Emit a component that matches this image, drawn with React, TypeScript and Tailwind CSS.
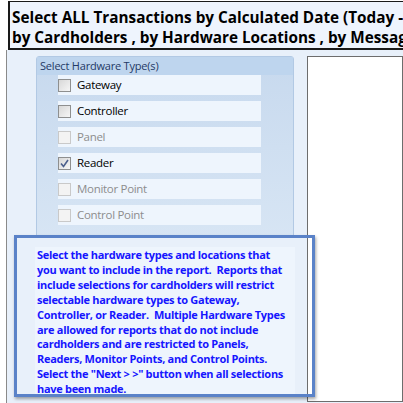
const items = [
  { label: "Gateway", enabled: true, checked: false },
  { label: "Controller", enabled: true, checked: false },
  { label: "Panel", enabled: false, checked: false },
  { label: "Reader", enabled: true, checked: true },
  { label: "Monitor Point", enabled: false, checked: false },
  { label: "Control Point", enabled: false, checked: false },
];

const help = [
  "Select the hardware types and locations that",
  "you want to include in the report.  Reports that",
  "include selections for cardholders will restrict",
  "selectable hardware types to Gateway,",
  "Controller, or Reader.  Multiple Hardware Types",
  "are allowed for reports that do not include",
  "cardholders and are restricted to Panels,",
  "Readers, Monitor Points, and Control Points.",
  'Select the "Next > >" button when all selections',
  "have been made.",
];

const CheckBox = ({ enabled, checked }: { enabled: boolean; checked: boolean }) => (
  <div
    className={
      enabled
        ? "w-[13px] h-[13px] shrink-0 border border-[#8e8f8f] bg-gradient-to-br from-[#d8d8d8] to-[#f6f6f6] flex items-center justify-center"
        : "w-[13px] h-[13px] shrink-0 border border-[#c9c9c9] bg-[#f3f3f3]"
    }
  >
    {checked && (
      <svg width="9" height="9" viewBox="0 0 9 9">
        <path d="M1 4.5 L3.5 7.5 L8 1" fill="none" stroke="#4b5f8c" strokeWidth="1.6" />
      </svg>
    )}
  </div>
);

export default function App() {
  return (
    <div className="relative w-[403px] h-[403px] overflow-hidden bg-white" style={{ fontFamily: '"Open Sans", sans-serif' }}>
      <div className="ml-[8px] mt-[1px] h-[49px] w-[420px] border-l-2 border-t border-b-2 border-[#1a1a1a] bg-[#eef4fd] pl-[2px] pt-[5px] text-[15.3px] font-bold leading-[20px] text-black whitespace-nowrap">
        <div>Select ALL Transactions by Calculated Date (Today - 1 day) ,</div>
        <div>by Cardholders , by Hardware Locations , by Message Types</div>
      </div>
      <div className="ml-[6px] flex h-[353px] border-l border-[#8a8a8a] bg-[#e8f0fa]">
        <div className="flex w-[300px] shrink-0 flex-col pt-[6px]">
          <div className="ml-[29px] h-[182px] w-[258px] rounded-t-[3px] border border-[#b2c9e4] bg-gradient-to-b from-[#c7d9ee] to-[#d7e5f4]">
            <div className="h-[18px] bg-[#bed5ee] pl-[3px] text-[11px] tracking-[-0.2px] leading-[18px] text-[#1f3a66]">
              Select Hardware Type(s)
            </div>
            <div className="ml-[21px] flex flex-col gap-[6px]">
              {items.map((it) => (
                <div key={it.label} className="flex h-[20px] w-[203px] items-center gap-[6px] bg-[#eef5fd]">
                  <CheckBox enabled={it.enabled} checked={it.checked} />
                  <span
                    className={
                      it.enabled
                        ? "text-[11.5px] tracking-[-0.3px] text-black"
                        : "text-[11.5px] tracking-[-0.3px] text-[#8d8d8d]"
                    }
                  >
                    {it.label}
                  </span>
                </div>
              ))}
            </div>
          </div>
          <div className="ml-[28px] mt-[9px] h-[150px] w-[260px] bg-[#eef5fd] pl-[2px] pt-[1px] text-[11px] tracking-[-0.3px] font-bold leading-[14.9px] text-[#1616ff] whitespace-pre">
            {help.map((l) => (
              <div key={l}>{l}</div>
            ))}
          </div>
        </div>
        <div className="mt-[6px] h-[346px] flex-1 border border-[#6d6d6d] bg-white" />
      </div>
      <div className="absolute left-[14px] top-[235px] h-[162px] w-[301px] border-[3px] border-[#5a82c8] shadow-[1px_2px_3px_rgba(0,0,0,0.35)]" />
    </div>
  );
}
